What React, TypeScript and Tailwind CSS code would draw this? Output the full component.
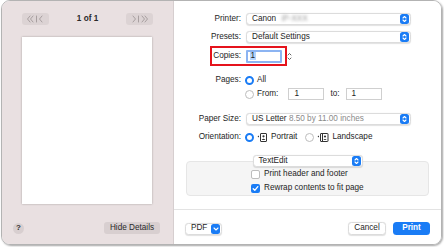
import React from 'react';

const font = { fontFamily: '"Liberation Sans", Arial, sans-serif' };

const Stepper: React.FC = () => (
  <div className="flex h-[10px] w-[9px] items-center justify-center rounded-[2.5px] bg-[#1a7cf5]">
    <svg width="5" height="8" viewBox="0 0 5 8" fill="none" stroke="white" strokeWidth="1.1" strokeLinecap="round" strokeLinejoin="round">
      <path d="M1 3 L2.5 1.5 L4 3" />
      <path d="M1 5 L2.5 6.5 L4 5" />
    </svg>
  </div>
);

const Select: React.FC<{ children: React.ReactNode; className?: string }> = ({ children, className = '' }) => (
  <div
    className={`flex h-[12px] items-center justify-between rounded-[3.5px] border border-[#dcdcdc] bg-white pl-[5px] pr-[1px] shadow-[0_0.5px_1px_rgba(0,0,0,0.12)] ${className}`}
  >
    <span className="whitespace-nowrap">{children}</span>
    <Stepper />
  </div>
);

const Radio: React.FC<{ on?: boolean }> = ({ on }) =>
  on ? (
    <div className="h-[9px] w-[9px] shrink-0 rounded-full border-[2.5px] border-[#1a7cf5] bg-white" />
  ) : (
    <div className="h-[9px] w-[9px] shrink-0 rounded-full border border-[#bdbdbd] bg-white" />
  );

const Checkbox: React.FC<{ on?: boolean }> = ({ on }) =>
  on ? (
    <div className="flex h-[9px] w-[9px] shrink-0 items-center justify-center rounded-[2px] bg-[#1a7cf5]">
      <svg width="7" height="7" viewBox="0 0 7 7" fill="none" stroke="white" strokeWidth="1.3" strokeLinecap="round" strokeLinejoin="round">
        <path d="M1.2 3.7 L2.8 5.3 L5.8 1.6" />
      </svg>
    </div>
  ) : (
    <div className="h-[9px] w-[9px] shrink-0 rounded-[2px] border border-[#bdbdbd] bg-white" />
  );

const Field: React.FC<{ children: React.ReactNode; className?: string }> = ({ children, className = '' }) => (
  <div className={`flex h-[12px] items-center border border-[#cfcfcf] bg-white pl-[5px] ${className}`}>{children}</div>
);

const PortraitIcon = () => (
  <svg width="11" height="9" viewBox="0 0 11 9" fill="none">
    <path d="M0.5 3.5 L2 2.5 L2 4.5 Z" fill="#333" />
    <rect x="3.5" y="0.5" width="6" height="8" rx="0.5" stroke="#333" strokeWidth="1" />
    <circle cx="6.5" cy="3.3" r="1.1" fill="#333" />
    <path d="M4.6 7 Q6.5 4.6 8.4 7 Z" fill="#333" />
  </svg>
);

const LandscapeIcon = () => (
  <svg width="12" height="9" viewBox="0 0 12 9" fill="none">
    <path d="M0.5 3.5 L2 2.5 L2 4.5 Z" fill="#333" />
    <rect x="3.5" y="0.5" width="7.5" height="8" rx="0.5" stroke="#333" strokeWidth="1" />
    <path d="M5.5 0.5 V8.5" stroke="#333" strokeWidth="1" />
    <circle cx="8" cy="3.5" r="1.1" fill="#333" />
    <path d="M6.3 7 Q8 4.8 9.7 7 Z" fill="#333" />
  </svg>
);

const NavButton: React.FC<{ dir: 'left' | 'right' }> = ({ dir }) => (
  <div className="flex h-[12px] w-[27px] items-center justify-center rounded-[3px] bg-[#dcd3d4]">
    <svg width="20" height="8" viewBox="0 0 20 8" fill="none" stroke="#a89fa0" strokeWidth="1" strokeLinecap="round" strokeLinejoin="round">
      {dir === 'left' ? (
        <>
          <path d="M4 1 L1.5 4 L4 7" />
          <path d="M7 1 L4.5 4 L7 7" />
          <path d="M10.5 1 V7" />
          <path d="M16 1 L13.5 4 L16 7" />
        </>
      ) : (
        <>
          <path d="M4 1 L6.5 4 L4 7" />
          <path d="M9.5 1 V7" />
          <path d="M13 1 L15.5 4 L13 7" />
          <path d="M16 1 L18.5 4 L16 7" />
        </>
      )}
    </svg>
  </div>
);

const Label: React.FC<{ children: React.ReactNode }> = ({ children }) => (
  <div className="w-[67px] shrink-0 text-right">{children}</div>
);

export default function App() {
  return (
    <div className="h-[247px] w-[444px] bg-white text-[8.2px] leading-none text-[#1e1e1e]" style={font}>
      <div className="ml-[1px] flex h-[245px] w-[441px] overflow-hidden rounded-[9px] border border-[#b3b3b3] shadow-[1px_1px_2px_rgba(0,0,0,0.35)]">
        {/* Sidebar */}
        <div className="flex w-[172px] shrink-0 flex-col border-r border-[#d6cecf] bg-[#e9e0e1]">
          <div className="mt-[12px] flex h-[12px] items-center justify-between px-[20px]">
            <NavButton dir="left" />
            <span className="font-semibold text-[#2a2a2a]">1 of 1</span>
            <NavButton dir="right" />
          </div>
          <div className="mx-[20px] mt-[12px] h-[167px] w-[130px] bg-white shadow-[0_0_2px_rgba(0,0,0,0.3)]" />
          <div className="mt-auto flex h-[35px] items-center justify-between pl-[11px] pr-[13px] pt-[3px]">
            <div className="flex h-[11px] w-[11px] items-center justify-center rounded-full bg-[#d8cfd0] text-[8px] font-bold text-[#333]">?</div>
            <div className="flex h-[12px] w-[56px] items-center justify-center rounded-[3px] bg-[#d8cfd0] text-[#2a2a2a]">Hide Details</div>
          </div>
        </div>

        {/* Main panel */}
        <div className="flex flex-1 flex-col bg-white">
          <div className="flex flex-1 flex-col">
            <div className="mt-[12px] flex items-center">
              <Label>Printer:</Label>
              <Select className="ml-[5px] w-[165px]">
                Canon <span className="ml-[3px] inline-block text-[#9a9a9a] blur-[1.4px]">iP-XXX</span>
              </Select>
            </div>
            <div className="mt-[6px] flex items-center">
              <Label>Presets:</Label>
              <Select className="ml-[5px] w-[165px]">Default Settings</Select>
            </div>
            <div className="relative mt-[3px] flex h-[20px] items-center">
              <Label>Copies:</Label>
              <div className="ml-[5px] flex h-[13px] w-[36px] items-center rounded-[1px] border-2 border-[#8cb4f2] bg-white pl-[2px]">
                <span className="bg-[#b4d4fc] px-[0.5px]">1</span>
              </div>
              <svg className="ml-[5px]" width="5" height="9" viewBox="0 0 5 9" fill="none" stroke="#555" strokeWidth="0.9" strokeLinecap="round" strokeLinejoin="round">
                <path d="M1 3 L2.5 1.5 L4 3" />
                <path d="M1 6 L2.5 7.5 L4 6" />
              </svg>
              <div className="absolute left-[36px] top-0 h-[20px] w-[77px] border-2 border-[#e5131c]" />
            </div>
            <div className="mt-[9px] flex h-[10px] items-center">
              <Label>Pages:</Label>
              <div className="ml-[4px] flex items-center gap-[3px]">
                <Radio on />
                <span>All</span>
              </div>
            </div>
            <div className="mt-[3px] flex h-[12px] items-center">
              <div className="w-[67px] shrink-0" />
              <div className="ml-[4px] flex items-center gap-[3px]">
                <Radio />
                <span>From:</span>
              </div>
              <Field className="ml-[10px] w-[36px]">1</Field>
              <span className="ml-[6px]">to:</span>
              <Field className="ml-[6px] w-[36px]">1</Field>
            </div>
            <div className="mt-[13px] flex items-center">
              <Label>Paper Size:</Label>
              <Select className="ml-[5px] w-[165px]">
                US Letter <span className="text-[#8a8a8a]">8.50 by 11.00 inches</span>
              </Select>
            </div>
            <div className="mt-[6px] flex h-[12px] items-center">
              <Label>Orientation:</Label>
              <div className="ml-[4px] flex items-center gap-[3px]">
                <Radio on />
                <PortraitIcon />
                <span>Portrait</span>
              </div>
              <div className="ml-[8px] flex items-center gap-[3px]">
                <Radio />
                <LandscapeIcon />
                <span>Landscape</span>
              </div>
            </div>
            <div className="ml-[12px] mt-[18px] flex h-[35px] w-[243px] flex-col rounded-[4px] border border-[#e6e6e6] bg-[#f5f5f5]">
              <Select className="mx-auto -mt-[7px] w-[110px]">TextEdit</Select>
              <div className="ml-[64px] mt-[2px] flex h-[10px] items-center gap-[4px]">
                <Checkbox />
                <span>Print header and footer</span>
              </div>
              <div className="ml-[64px] mt-[4px] flex h-[10px] items-center gap-[4px]">
                <Checkbox on />
                <span>Rewrap contents to fit page</span>
              </div>
            </div>
          </div>
          <div className="flex h-[35px] items-center border-t border-[#e3e3e3] pl-[11px] pr-[11px] pt-[3px]">
            <div className="flex h-[12px] items-center gap-[4px] rounded-[3.5px] border border-[#dcdcdc] bg-white pl-[5px] pr-[1px] shadow-[0_0.5px_1px_rgba(0,0,0,0.12)]">
              <span>PDF</span>
              <div className="flex h-[10px] w-[9px] items-center justify-center rounded-[2.5px] bg-[#1a7cf5]">
                <svg width="6" height="4" viewBox="0 0 6 4" fill="none" stroke="white" strokeWidth="1.1" strokeLinecap="round" strokeLinejoin="round">
                  <path d="M1 1 L3 3 L5 1" />
                </svg>
              </div>
            </div>
            <div className="ml-auto flex h-[13px] w-[38px] items-center justify-center rounded-[3.5px] border border-[#dcdcdc] bg-white shadow-[0_0.5px_1px_rgba(0,0,0,0.12)]">Cancel</div>
            <div className="ml-[7px] flex h-[13px] w-[37px] items-center justify-center rounded-[3.5px] bg-[#1a7cf5] font-semibold text-white">Print</div>
          </div>
        </div>
      </div>
    </div>
  );
}
